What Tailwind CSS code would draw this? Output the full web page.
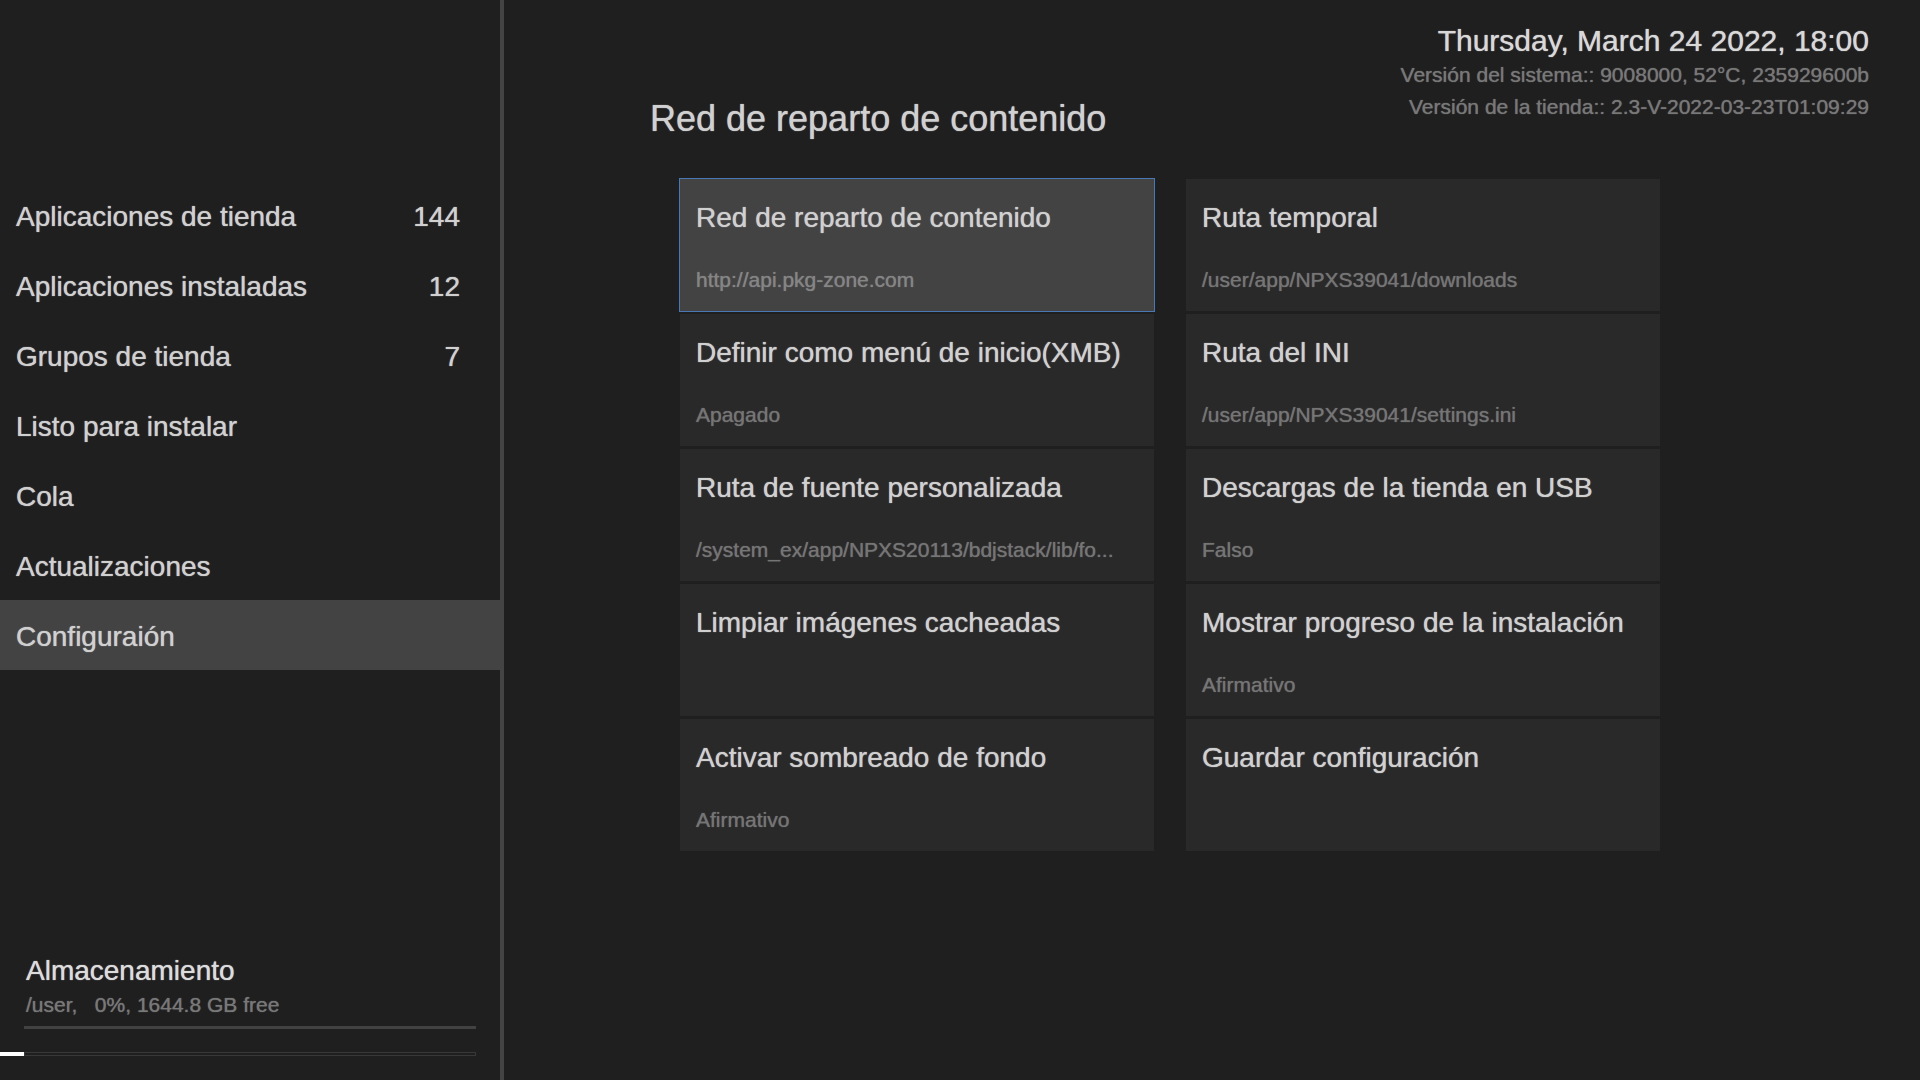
<!DOCTYPE html>
<html lang="es">
<head>
<meta charset="utf-8">
<meta name="viewport" content="width=device-width, initial-scale=1">
<title>Configuración</title>
<script src="https://cdn.jsdelivr.net/npm/@tailwindcss/browser@4"></script>
</head>
<body class="flex min-h-screen bg-[#1f1f1f] font-['Liberation_Sans',Arial,sans-serif] text-[28px] leading-8 text-[#d0d0d0] [text-shadow:0_0_1px_currentColor]">

  <aside class="flex w-[504px] shrink-0 flex-col border-r-4 border-[#444444] pt-[180px] pb-6">
    <nav>
      <a href="#" class="flex h-[70px] items-center justify-between pt-1 pr-10 pl-4"><span>Aplicaciones de tienda</span><span>144</span></a>
      <a href="#" class="flex h-[70px] items-center justify-between pt-1 pr-10 pl-4"><span>Aplicaciones instaladas</span><span>12</span></a>
      <a href="#" class="flex h-[70px] items-center justify-between pt-1 pr-10 pl-4"><span>Grupos de tienda</span><span>7</span></a>
      <a href="#" class="flex h-[70px] items-center pt-1 pl-4">Listo para instalar</a>
      <a href="#" class="flex h-[70px] items-center pt-1 pl-4">Cola</a>
      <a href="#" class="flex h-[70px] items-center pt-1 pl-4">Actualizaciones</a>
      <a href="#" aria-current="page" class="flex h-[70px] items-center bg-[#434343] pt-1 pl-4">Configuraión</a>
    </nav>

    <section class="mt-auto">
      <div class="mr-6 ml-6 border-b-3 border-[#424242] pb-[7px]">
        <h2 class="pl-[2px] text-[#dcdcdc]">Almacenamiento</h2>
        <p class="pt-1 pl-[2px] text-[21px] leading-7 whitespace-pre text-[#787878]">/user,   0%, 1644.8 GB free</p>
      </div>
      <div role="progressbar" aria-label="Almacenamiento" aria-valuenow="0" aria-valuemin="0" aria-valuemax="100" class="mt-[23px] mr-6 flex h-1">
        <div class="w-6 bg-white"></div>
        <div class="flex-1 border border-[#383838]"></div>
      </div>
    </section>
  </aside>

  <main class="min-w-0 flex-1">
    <header class="flex h-[179px] justify-between pr-[51px] pl-[146px]">
      <h1 class="pt-[99px] text-[36px] leading-10">Red de reparto de contenido</h1>
      <div class="pt-[25px] text-right">
        <p class="text-[30px] leading-8 text-[#d8d8d8]">Thursday, March 24 2022, 18:00</p>
        <p class="pt-1 text-[21px] leading-7 text-[#787878]">Versión del sistema:: 9008000, 52°C, 235929600b</p>
        <p class="pt-1 text-[21px] leading-7 text-[#787878]">Versión de la tienda:: 2.3-V-2022-03-23T01:09:29</p>
      </div>
    </header>

    <div class="grid grid-cols-2 gap-x-8 gap-y-[3px] pr-[260px] pl-[176px] [&_span]:[text-shadow:0_0_1px_currentColor]">
      <button class="flex h-[132px] flex-col items-start gap-8 bg-[#434343] px-4 pt-[23px] text-left whitespace-nowrap outline outline-[#4a78b5]">
        <span>Red de reparto de contenido</span>
        <span class="text-[21px] leading-7 text-[#858585]">http://api.pkg-zone.com</span>
      </button>
      <button class="flex h-[132px] flex-col items-start gap-8 bg-[#292929] px-4 pt-[23px] text-left whitespace-nowrap">
        <span>Ruta temporal</span>
        <span class="text-[21px] leading-7 text-[#757575]">/user/app/NPXS39041/downloads</span>
      </button>
      <button class="flex h-[132px] flex-col items-start gap-8 bg-[#292929] px-4 pt-[23px] text-left whitespace-nowrap">
        <span>Definir como menú de inicio(XMB)</span>
        <span class="text-[21px] leading-7 text-[#757575]">Apagado</span>
      </button>
      <button class="flex h-[132px] flex-col items-start gap-8 bg-[#292929] px-4 pt-[23px] text-left whitespace-nowrap">
        <span>Ruta del INI</span>
        <span class="text-[21px] leading-7 text-[#757575]">/user/app/NPXS39041/settings.ini</span>
      </button>
      <button class="flex h-[132px] flex-col items-start gap-8 bg-[#292929] px-4 pt-[23px] text-left whitespace-nowrap">
        <span>Ruta de fuente personalizada</span>
        <span class="text-[21px] leading-7 text-[#757575]">/system_ex/app/NPXS20113/bdjstack/lib/fo...</span>
      </button>
      <button class="flex h-[132px] flex-col items-start gap-8 bg-[#292929] px-4 pt-[23px] text-left whitespace-nowrap">
        <span>Descargas de la tienda en USB</span>
        <span class="text-[21px] leading-7 text-[#757575]">Falso</span>
      </button>
      <button class="flex h-[132px] flex-col items-start gap-8 bg-[#292929] px-4 pt-[23px] text-left whitespace-nowrap">
        <span>Limpiar imágenes cacheadas</span>
      </button>
      <button class="flex h-[132px] flex-col items-start gap-8 bg-[#292929] px-4 pt-[23px] text-left whitespace-nowrap">
        <span>Mostrar progreso de la instalación</span>
        <span class="text-[21px] leading-7 text-[#757575]">Afirmativo</span>
      </button>
      <button class="flex h-[132px] flex-col items-start gap-8 bg-[#292929] px-4 pt-[23px] text-left whitespace-nowrap">
        <span>Activar sombreado de fondo</span>
        <span class="text-[21px] leading-7 text-[#757575]">Afirmativo</span>
      </button>
      <button class="flex h-[132px] flex-col items-start gap-8 bg-[#292929] px-4 pt-[23px] text-left whitespace-nowrap">
        <span>Guardar configuración</span>
      </button>
    </div>
  </main>
</body>
</html>
